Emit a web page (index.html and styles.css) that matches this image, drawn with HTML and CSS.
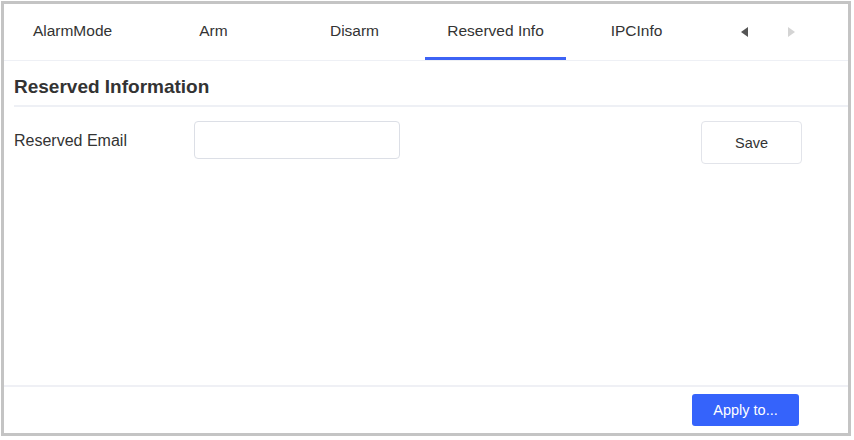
FILE: index.html
```html
<!DOCTYPE html>
<html>
<head>
<meta charset="utf-8">
<link rel="stylesheet" href="styles.css">
</head>
<body>
<div class="frame">
  <div class="tabbar">
    <div class="tabs">
      <div class="tab">AlarmMode</div>
      <div class="tab">Arm</div>
      <div class="tab">Disarm</div>
      <div class="tab active">Reserved Info</div>
      <div class="tab">IPCInfo</div>
    </div>
    <div class="arrows">
      <span class="arrow left"></span>
      <span class="arrow right"></span>
    </div>
  </div>
  <div class="main">
    <div class="section-title">Reserved Information</div>
    <div class="form-row">
      <label class="label">Reserved Email</label>
      <input class="input" type="text">
      <div class="spacer"></div>
      <button class="btn-save">Save</button>
    </div>
  </div>
  <div class="footer">
    <button class="btn-apply">Apply to...</button>
  </div>
</div>
</body>
</html>
```

FILE: styles.css
```css
html, body {
  margin: 0;
  padding: 0;
  background: #fff;
}
body {
  font-family: "Liberation Sans", Arial, sans-serif;
  color: #333;
}
.frame {
  margin: 1px;
  width: 844px;
  height: 429px;
  border: 3px solid #c4c4c4;
  display: flex;
  flex-direction: column;
  overflow: hidden;
}
.tabbar {
  display: flex;
  height: 56px;
  border-bottom: 1px solid #eef0f5;
  flex: none;
}
.tabs {
  display: flex;
  margin-left: -2px;
}
.tab {
  width: 141px;
  height: 56px;
  box-sizing: border-box;
  font-size: 15.5px;
  line-height: 20px;
  padding-top: 17px;
  text-align: center;
  color: #333;
  border-bottom: 3px solid transparent;
}
.tab.active {
  border-bottom-color: #3d63f5;
}
.arrows {
  display: flex;
  align-items: center;
  padding-left: 34px;
  gap: 40px;
  height: 52px;
  padding-top: 2px;
}
.arrow {
  width: 0;
  height: 0;
  border-top: 5px solid transparent;
  border-bottom: 5px solid transparent;
}
.arrow.left {
  border-right: 7px solid #555;
}
.arrow.right {
  border-left: 7px solid #d4d4d4;
}
.main {
  flex: 1;
  padding-left: 10px;
}
.section-title {
  font-size: 19px;
  font-weight: bold;
  color: #333;
  height: 44px;
  line-height: 52px;
  border-bottom: 2px solid #eef0f5;
}
.form-row {
  display: flex;
  align-items: flex-start;
  margin-top: 14px;
}
.label {
  width: 180px;
  font-size: 16px;
  line-height: 40px;
  color: #333;
}
.input {
  width: 206px;
  height: 38px;
  box-sizing: border-box;
  border: 1px solid #dcdfe6;
  border-radius: 4px;
  outline: none;
  margin: 0;
  padding: 0 10px;
}
.spacer {
  flex: 1;
}
.btn-save {
  width: 101px;
  height: 43px;
  margin: 0 46px 0 0;
  border: 1px solid #e2e4ea;
  border-radius: 4px;
  background: #fff;
  font-family: "Liberation Sans", Arial, sans-serif;
  font-size: 14.5px;
  color: #333;
  padding: 0;
}
.footer {
  flex: none;
  border-top: 2px solid #eff0f5;
  padding: 7px 49px 7px 0;
  display: flex;
  justify-content: flex-end;
}
.btn-apply {
  width: 107px;
  height: 32px;
  margin: 0;
  border: none;
  border-radius: 3px;
  background: #3563fb;
  color: #fff;
  font-family: "Liberation Sans", Arial, sans-serif;
  font-size: 14.5px;
  padding: 0;
}
```
